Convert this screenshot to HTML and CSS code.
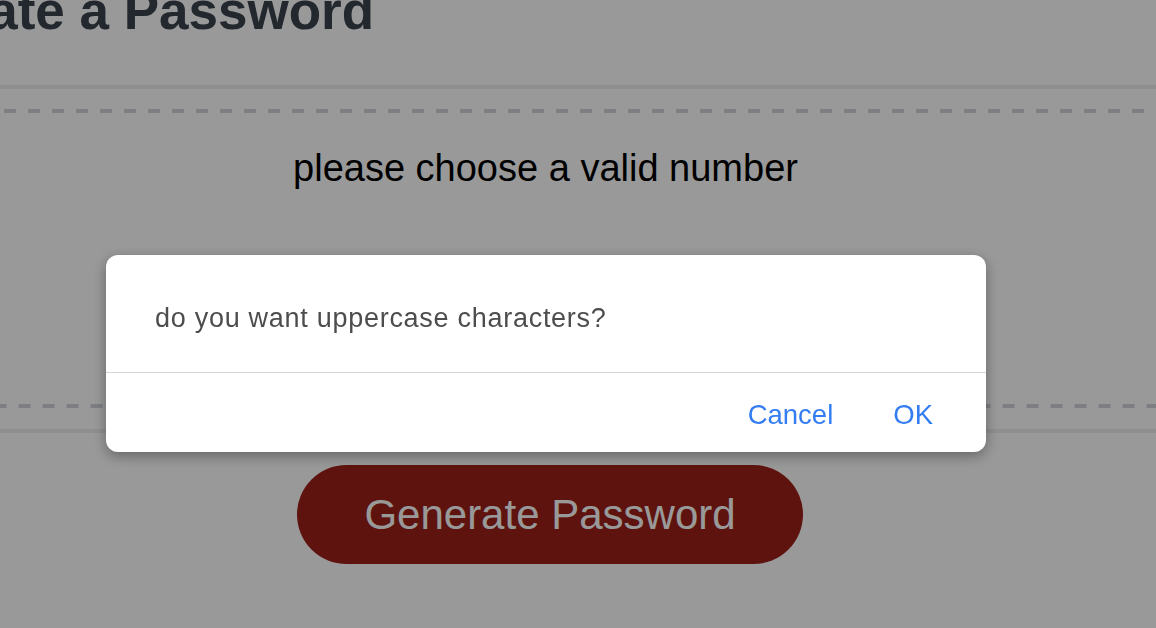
FILE: index.html
```html
<!DOCTYPE html>
<html lang="en">
<head>
<meta charset="utf-8">
<title>Password Generator</title>
<link rel="stylesheet" href="styles.css">
</head>
<body>
<div class="page">
  <div class="card">
    <div class="card-header">
      <h1 class="title">Generate a Password</h1>
    </div>
    <div class="card-body">
      <div class="password-box">please choose a valid number</div>
    </div>
    <div class="card-footer">
      <button class="generate" type="button">Generate Password</button>
    </div>
  </div>
</div>
<div class="overlay"></div>
<div class="dialog" role="dialog">
  <div class="dialog-message">do you want uppercase characters?</div>
  <div class="dialog-actions">
    <button class="dialog-btn" type="button">Cancel</button>
    <button class="dialog-btn" type="button">OK</button>
  </div>
</div>
</body>
</html>
```
FILE: styles.css
```css
html, body {
  margin: 0;
  padding: 0;
  background: #ffffff;
  overflow: hidden;
  height: 100%;
}

.page {
  width: 1156px;
  height: 628px;
  overflow: hidden;
}

.card {
  width: 1500px;
  margin: -39px 0 0 -200px;
  font-family: "Liberation Sans", Arial, sans-serif;
}

.card-header {
  padding: 20px 35px 44px;
  border-bottom: 4px solid #efefef;
}

.title {
  margin: 0;
  font-size: 53px;
  line-height: 60px;
  font-weight: 700;
  color: #39434d;
  white-space: nowrap;
}

.card-body {
  padding: 20px 50px 21px;
}

.password-box {
  box-sizing: border-box;
  height: 299px;
  padding: 37px 9px 0 0;
  text-align: center;
  font-size: 38px;
  line-height: 44px;
  color: #000000;
  background-image:
    linear-gradient(90deg, #d0d4da 0 12px, transparent 12px),
    linear-gradient(90deg, #d0d4da 0 12px, transparent 12px);
  background-size: 24px 4px, 24px 4px;
  background-repeat: repeat-x, repeat-x;
  background-position: 10px 0, 0.5px 100%;
  background-origin: border-box;
}

.card-footer {
  border-top: 4px solid #efefef;
  padding-top: 32px;
  display: flex;
  justify-content: center;
}

.generate {
  width: 506px;
  height: 99px;
  border: none;
  border-radius: 50px;
  background: #9d2119;
  color: #ffffff;
  font-family: "Liberation Sans", Arial, sans-serif;
  font-size: 42px;
  padding: 0;
}

.overlay {
  position: fixed;
  inset: 0;
  background: rgba(0, 0, 0, 0.4);
}

.dialog {
  position: fixed;
  left: 106px;
  top: 255px;
  width: 880px;
  height: 197px;
  background: #ffffff;
  border-radius: 12px;
  box-shadow: 0 4px 14px rgba(0, 0, 0, 0.35);
  display: flex;
  flex-direction: column;
  font-family: "Liberation Sans", Arial, sans-serif;
}

.dialog-message {
  height: 118px;
  box-sizing: border-box;
  padding: 48px 48px 0 49px;
  font-size: 27px;
  line-height: 30px;
  letter-spacing: 0.72px;
  color: #4d4d4d;
  border-bottom: 1px solid #d6d6d6;
}

.dialog-actions {
  flex: 1;
  display: flex;
  justify-content: flex-end;
  align-items: center;
  gap: 60px;
  padding: 4px 53px 0 0;
}

.dialog-btn {
  border: none;
  background: transparent;
  padding: 0;
  font-family: "Liberation Sans", Arial, sans-serif;
  font-size: 27.5px;
  line-height: 32px;
  color: #337cf2;
}
```
